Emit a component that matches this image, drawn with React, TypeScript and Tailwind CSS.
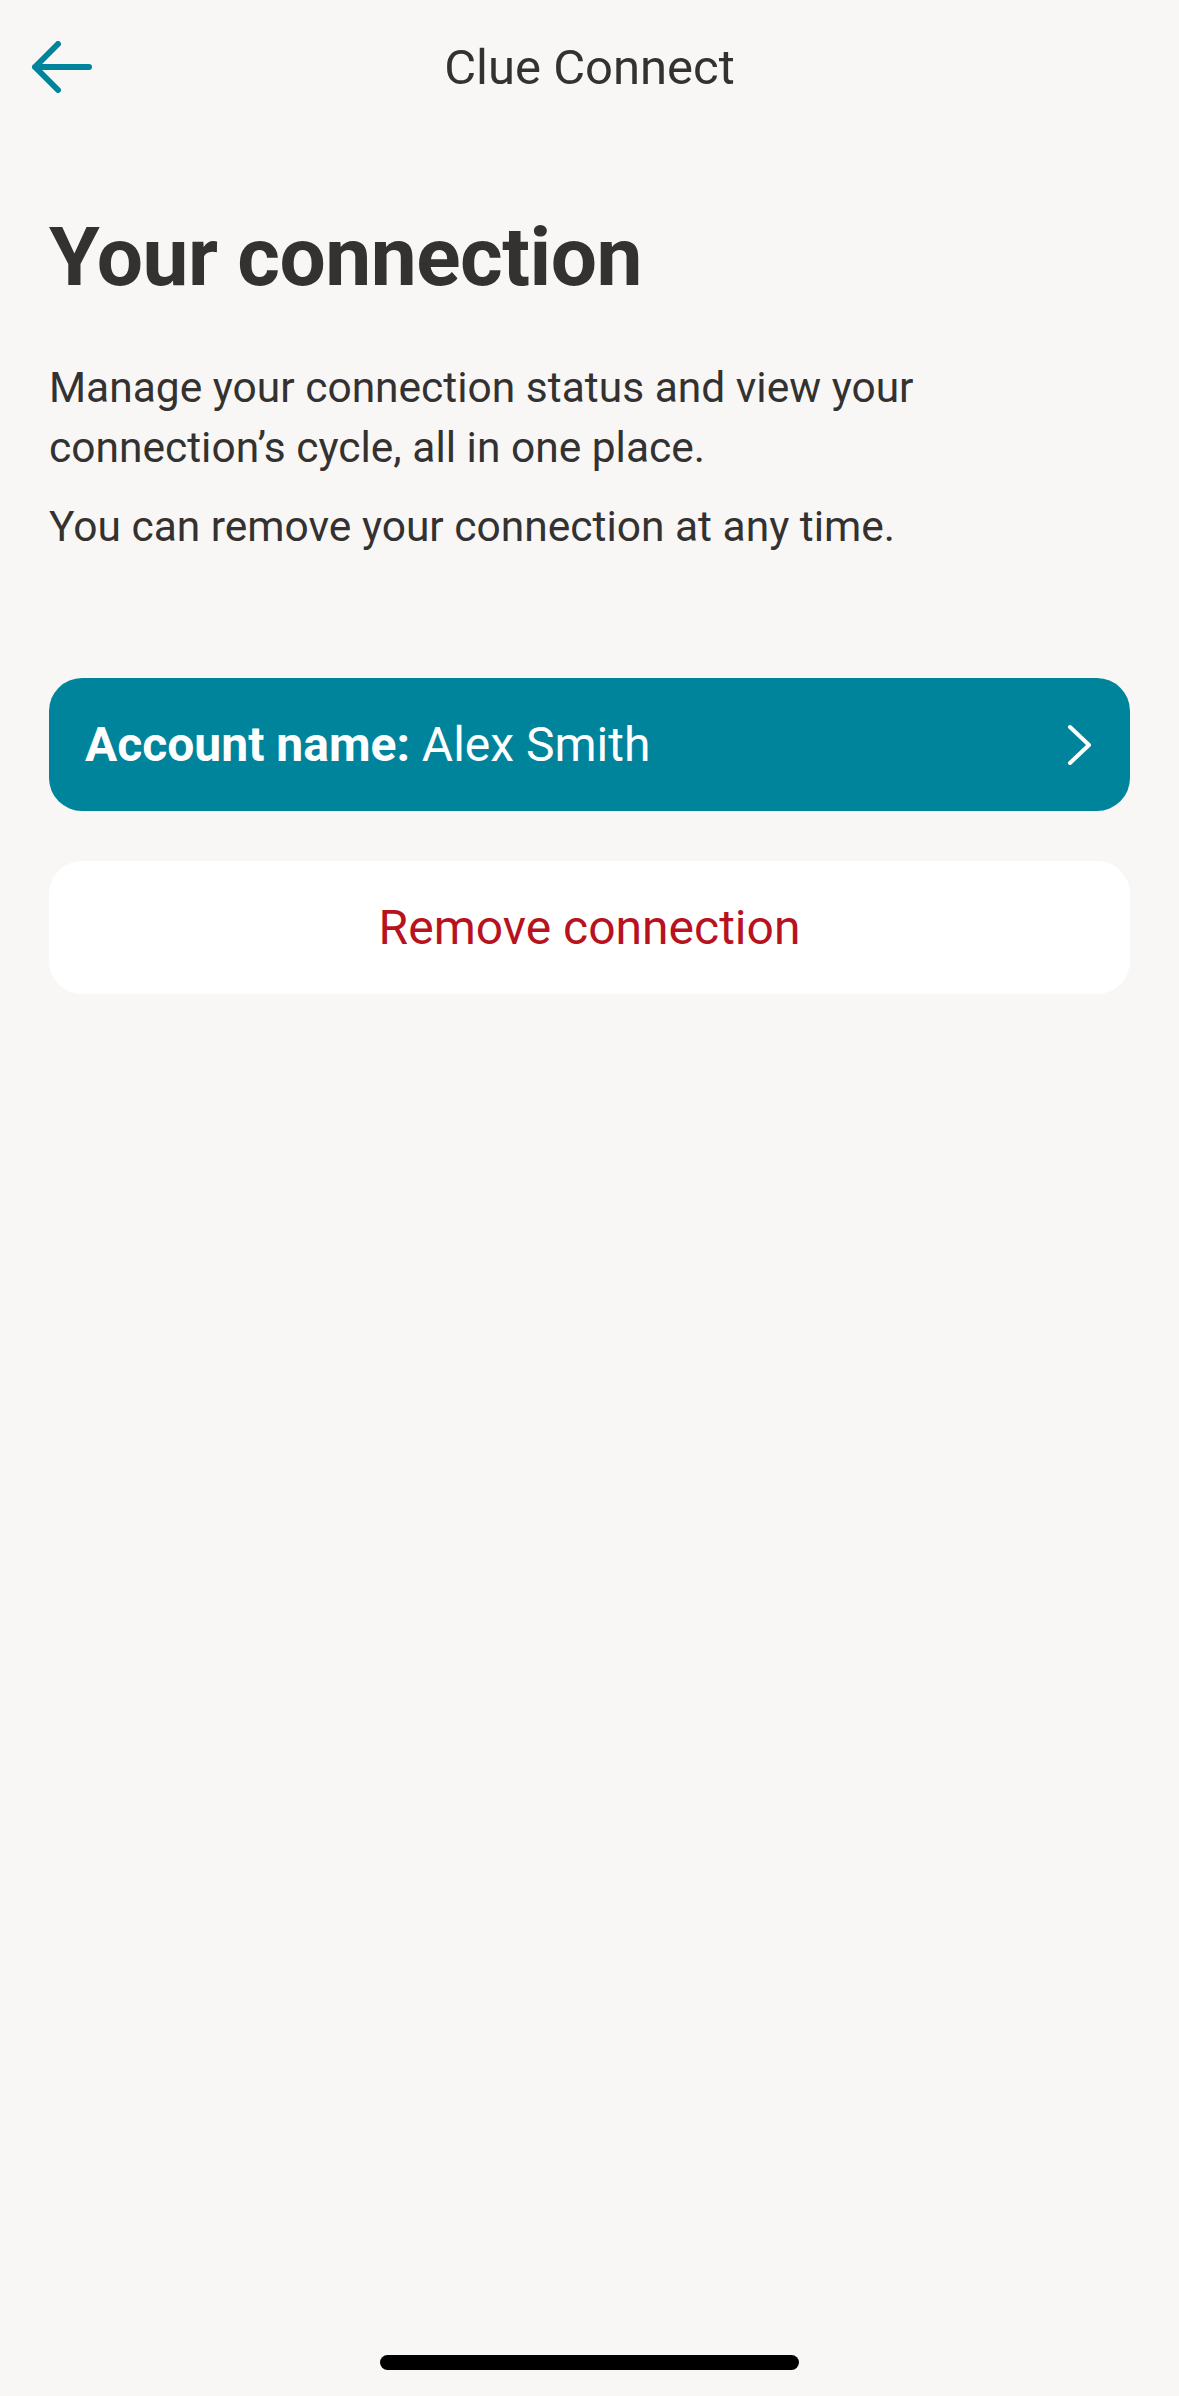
import React from 'react';

function BackArrow() {
  return (
    <svg width="62" height="52" viewBox="0 0 62 52" fill="none">
      <path
        d="M4 26 H58 M27 3 L4 26 L27 49"
        stroke="#00849c"
        strokeWidth="6"
        strokeLinecap="round"
        strokeLinejoin="round"
      />
    </svg>
  );
}

function Chevron() {
  return (
    <svg width="28" height="42" viewBox="0 0 28 42" fill="none">
      <path d="M4 3 L23 21 L4 39" stroke="#ffffff" strokeWidth="4" strokeLinecap="round" strokeLinejoin="round" />
    </svg>
  );
}

export default function App() {
  return (
    <div className="w-[1179px] h-[2396px] bg-[#f8f7f5] flex flex-col font-['Roboto',sans-serif] text-[#333231]">
      {/* Top bar */}
      <header className="h-[134px] grid grid-cols-[1fr_auto_1fr] items-center px-[31px]">
        <button className="justify-self-start flex items-center">
          <BackArrow />
        </button>
        <h1 className="text-[49px] leading-none text-[#333231]">Clue Connect</h1>
        <div />
      </header>

      <main className="flex-1 flex flex-col px-[49px]">
        <h2 className="mt-[73px] text-[82px] leading-[100px] font-bold tracking-[-0.5px] text-[#333231]">
          Your connection
        </h2>

        <p className="mt-[51px] text-[42.5px] leading-[60px] max-w-[1000px]">
          Manage your connection status and view your
          <br />
          connection’s cycle, all in one place.
        </p>
        <p className="mt-[19px] text-[42.5px] leading-[60px]">
          You can remove your connection at any time.
        </p>

        <button className="mt-[121px] h-[133px] w-full rounded-[33px] bg-[#00849c] flex items-center justify-between pl-[36px] pr-[36px] text-white">
          <span className="text-[48px] leading-none">
            <span className="font-bold">Account name:</span> Alex Smith
          </span>
          <Chevron />
        </button>

        <button className="mt-[50px] h-[133px] w-full rounded-[33px] bg-white flex items-center justify-center">
          <span className="text-[48px] leading-none text-[#b8121f]">Remove connection</span>
        </button>
      </main>

      {/* Home indicator */}
      <div className="h-[60px] flex items-start justify-center pt-[19px]">
        <div className="w-[419px] h-[15px] rounded-full bg-black" />
      </div>
    </div>
  );
}
